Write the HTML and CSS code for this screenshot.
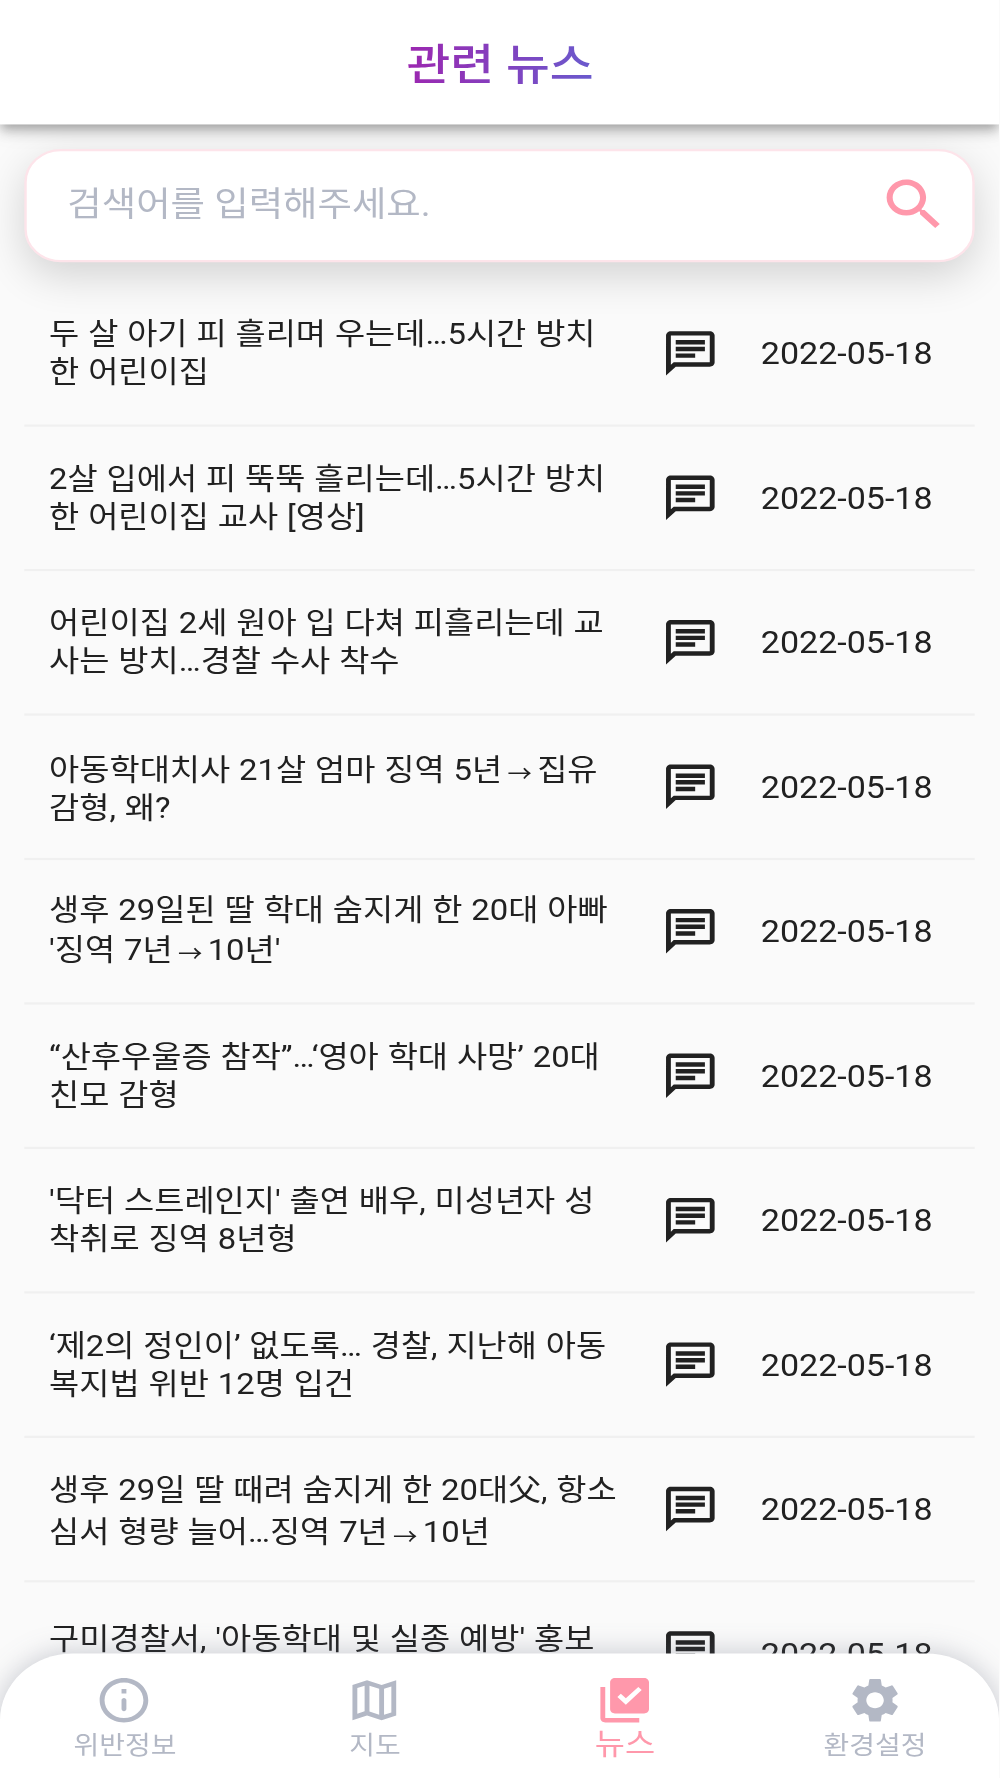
FILE: index.html
```html
<!DOCTYPE html>
<html lang="ko">
<head>
  <meta charset="UTF-8" />
  <meta name="viewport" content="width=device-width, initial-scale=1" />
  <title>관련 뉴스</title>
  <link rel="stylesheet" href="styles.css">
</head>
<body>
  <svg class="sprite">
    <symbol id="chat" viewBox="0 0 24 24">
      <path d="M4 4h16v12H5.17L4 17.17V4m0-2c-1.1 0-1.99.9-1.99 2L2 22l4-4h14c1.1 0 2-.9 2-2V4c0-1.1-.9-2-2-2H4zm2 10h8v2H6v-2zm0-3h12v2H6V9zm0-3h12v2H6V6z"/>
    </symbol>
  </svg>

  <div class="app">
    <header class="header">
      <h1>관련 뉴스</h1>
    </header>

    <main class="content">
      <div class="search">
        <input type="text" placeholder="검색어를 입력해주세요.">
        <svg class="search-icon" viewBox="0 0 24 24">
          <path d="M15.5 14h-.79l-.28-.27C15.41 12.59 16 11.11 16 9.5 16 5.91 13.09 3 9.5 3S3 5.91 3 9.5 5.91 16 9.5 16c1.61 0 3.09-.59 4.23-1.57l.27.28v.79l5 4.99L20.49 19l-4.99-5zm-6 0C7.01 14 5 11.99 5 9.5S7.01 5 9.5 5 14 7.01 14 9.5 11.99 14 9.5 14z"/>
        </svg>
      </div>

      <ul class="news" id="newsList"></ul>
    </main>

    <nav class="tabs">
      <a class="tab">
        <svg viewBox="0 0 24 24"><path d="M12 2C6.48 2 2 6.48 2 12s4.48 10 10 10 10-4.48 10-10S17.52 2 12 2zm0 18c-4.41 0-8-3.59-8-8s3.59-8 8-8 8 3.59 8 8-3.59 8-8 8zM11 7h2v2h-2zM12 11c.55 0 1 .45 1 1v4c0 .55-.45 1-1 1s-1-.45-1-1v-4c0-.55.45-1 1-1z"/></svg>
        <span>위반정보</span>
      </a>
      <a class="tab">
        <svg viewBox="0 0 24 24"><path fill-rule="evenodd" d="M3 5.1L9 3l6 2.1L21 3v15.9L15 21l-6-2.1L3 21zM5 6.5v11.6l3-1.1V5.45zM10 5.47v11.66l4 1.4V6.87zM16 6.86v11.69l3-1.05V5.8z"/></svg>
        <span>지도</span>
      </a>
      <a class="tab active">
        <svg viewBox="0 0 24 24"><path d="M20 2H8c-1.1 0-2 .9-2 2v12c0 1.1.9 2 2 2h12c1.1 0 2-.9 2-2V4c0-1.1-.9-2-2-2zm-7.53 12L9 10.5l1.4-1.41 2.07 2.08L17.6 6 19 7.41 12.47 14zM4 20h14v2H4c-1.1 0-2-.9-2-2V6h2v14z"/></svg>
        <span>뉴스</span>
      </a>
      <a class="tab">
        <svg viewBox="0 0 24 24"><path d="M19.14 12.94c.04-.3.06-.61.06-.94 0-.32-.02-.64-.07-.94l2.03-1.58c.18-.14.23-.41.12-.61l-1.92-3.32c-.12-.22-.37-.29-.59-.22l-2.39.96c-.5-.38-1.03-.7-1.62-.94l-.36-2.54c-.04-.24-.24-.41-.48-.41h-3.84c-.24 0-.43.17-.47.41l-.36 2.54c-.59.24-1.13.57-1.62.94l-2.39-.96c-.22-.08-.47 0-.59.22L2.74 8.87c-.12.21-.08.47.12.61l2.03 1.58c-.05.3-.09.63-.09.94s.02.64.07.94l-2.03 1.58c-.18.14-.23.41-.12.61l1.92 3.32c.12.22.37.29.59.22l2.39-.96c.5.38 1.03.7 1.62.94l.36 2.54c.05.24.24.41.48.41h3.84c.24 0 .44-.17.47-.41l.36-2.54c.59-.24 1.13-.56 1.62-.94l2.39.96c.22.08.47 0 .59-.22l1.92-3.32c.12-.22.07-.47-.12-.61l-2.01-1.58zM12 15.6c-1.98 0-3.6-1.62-3.6-3.6s1.62-3.6 3.6-3.6 3.6 1.62 3.6 3.6-1.62 3.6-3.6 3.6z"/></svg>
        <span>환경설정</span>
      </a>
    </nav>
  </div>

  <script>
    const arrow = '<span class="arrow">→</span>';

    const news = [
      { title: '두 살 아기 피 흘리며 우는데…5시간 방치<br>한 어린이집', date: '2022-05-18' },
      { title: '2살 입에서 피 뚝뚝 흘리는데…5시간 방치<br>한 어린이집 교사 [영상]', date: '2022-05-18' },
      { title: '어린이집 2세 원아 입 다쳐 피흘리는데 교<br>사는 방치…경찰 수사 착수', date: '2022-05-18' },
      { title: '아동학대치사 21살 엄마 징역 5년' + arrow + '집유<br>감형, 왜?', date: '2022-05-18', size: 'arrow-first' },
      { title: "생후 29일된 딸 학대 숨지게 한 20대 아빠<br>'징역 7년" + arrow + "10년'", date: '2022-05-18', size: 'arrow-last' },
      { title: '“산후우울증 참작”…‘영아 학대 사망’ 20대<br>친모 감형', date: '2022-05-18' },
      { title: "'닥터 스트레인지' 출연 배우, 미성년자 성<br>착취로 징역 8년형", date: '2022-05-18' },
      { title: '‘제2의 정인이’ 없도록… 경찰, 지난해 아동<br>복지법 위반 12명 입건', date: '2022-05-18' },
      { title: '생후 29일 딸 때려 숨지게 한 20대父, 항소<br>심서 형량 늘어…징역 7년' + arrow + '10년', date: '2022-05-18', size: 'hanja' },
      { title: "구미경찰서, '아동학대 및 실종 예방' 홍보<br>캠페인", date: '2022-05-18' }
    ];

    const list = document.getElementById('newsList');

    news.forEach(item => {
      const li = document.createElement('li');
      li.className = 'news-row';
      li.innerHTML =
        '<p class="news-title ' + (item.size || '') + '">' + item.title + '</p>' +
        '<svg class="news-icon"><use href="#chat"></use></svg>' +
        '<time class="news-date">' + item.date + '</time>';
      list.appendChild(li);
    });
  </script>
</body>
</html>
```
FILE: styles.css
```css
* {
  box-sizing: border-box;
}
html {
  overflow: hidden;
}
body {
  margin: 0;
  width: 1000px;
  height: 1778px;
  overflow: hidden;
  background-color: #fafafa;
  font-family: Roboto, "Noto Sans CJK KR", sans-serif;
  color: #212121;
}
.sprite {
  display: none;
}
.app {
  display: flex;
  flex-direction: column;
  width: 411.4px;
  height: 800px;
  overflow: hidden;
  background-color: #fafafa;
  transform: scale(2.4307, 2.2225);
  transform-origin: 0 0;
}
.header {
  flex: none;
  display: flex;
  align-items: center;
  justify-content: center;
  height: 56.4px;
  padding-top: 3.6px;
  background-color: white;
  box-shadow: 0 2px 4px -1px rgba(0,0,0,0.2), 0 4px 5px rgba(0,0,0,0.14), 0 1px 10px rgba(0,0,0,0.12);
  z-index: 1;
}
h1 {
  margin: 0;
  font-size: 19.6px;
  font-weight: 500;
  line-height: 28px;
  background: linear-gradient(to right, #9c27b0, #6a5acd);
  -webkit-background-clip: text;
  background-clip: text;
  color: transparent;
}
.content {
  flex: 1;
  min-height: 0;
  padding: 10.4px 10px 0 10.2px;
}
.search {
  display: flex;
  align-items: center;
  height: 50.8px;
  padding: 0 9.2px 0 16.5px;
  background-color: white;
  border: 1px solid #fde4ea;
  border-radius: 15px;
  box-shadow: 0 6px 18px rgba(0,0,0,0.16);
}
.search input {
  flex: 1;
  min-width: 0;
  padding: 0;
  border: none;
  outline: none;
  background: none;
  font-family: inherit;
  font-size: 15.4px;
}
.search input::placeholder {
  color: #b3b8c5;
}
.search-icon {
  width: 30px;
  height: 30px;
  fill: #ff98ab;
}
.news {
  margin: 9.2px 0 0;
  padding: 0;
  list-style: none;
}
.news-row {
  display: flex;
  align-items: center;
  height: 65px;
  padding: 0 10px;
  border-bottom: 1px solid #f0f0f0;
  font-size: 13.5px;
  word-spacing: 0.3px;
}
.news-title {
  flex: none;
  width: 252px;
  margin: 0;
  line-height: 16.3px;
  white-space: nowrap;
}
.news-title.arrow-first {
  line-height: 17.3px;
  padding-top: 2.4px;
}
.news-title.arrow-last {
  line-height: 18.4px;
  padding-bottom: 1.5px;
}
.news-title.hanja {
  line-height: 19.2px;
  padding-top: 3.2px;
}
.news-row:last-child .news-title {
  padding-top: 2.4px;
}
.arrow {
  display: inline-block;
  width: 14.4px;
  line-height: 12px;
  vertical-align: -1px;
  text-align: center;
  font-size: 10px;
}
.news-icon {
  width: 24px;
  height: 24px;
  fill: #212121;
}
.news-date {
  margin-left: 16.8px;
  font-size: 14px;
  white-space: nowrap;
}
.tabs {
  flex: none;
  display: flex;
  height: 56.3px;
  background-color: white;
  border-radius: 30px 30px 0 0;
  box-shadow: 0 0 12px rgba(100,105,125,0.35);
  z-index: 1;
}
.tab {
  flex: 1;
  display: flex;
  flex-direction: column;
  align-items: center;
  padding-top: 9.3px;
  color: #b3b8c5;
  font-size: 11.5px;
}
.tab svg {
  width: 24px;
  height: 24px;
  fill: currentColor;
}
.tab span {
  line-height: 17.8px;
}
.tab.active {
  color: #ff98ab;
  font-size: 13.5px;
}
.tab.active span {
  line-height: 15px;
}
```
